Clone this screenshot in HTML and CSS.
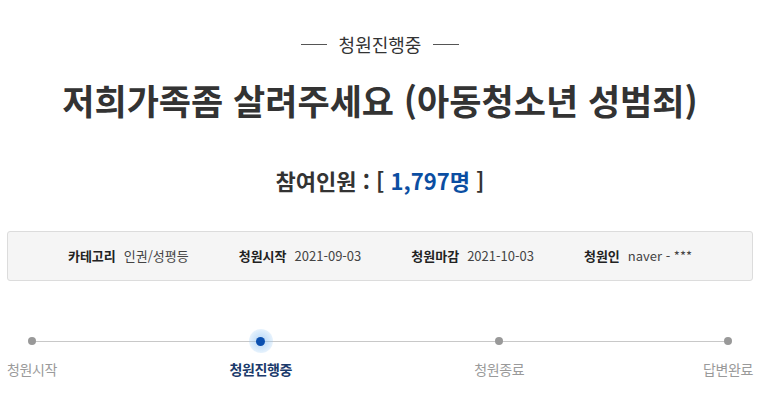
FILE: index.html
```html
<!DOCTYPE html>
<html lang="ko">
<head>
<meta charset="utf-8">
<title>청원진행중</title>
<link rel="stylesheet" href="styles.css">
</head>
<body>
<div class="page">
  <div class="status"><span class="dash"></span><span class="status-text">청원진행중</span><span class="dash"></span></div>
  <h1 class="title">저희가족좀 살려주세요 (아동청소년 성범죄)</h1>
  <p class="count">참여인원 : [ <span class="num">1,797명</span> ]</p>
  <ul class="info">
    <li><b>카테고리</b><span>인권/성평등</span></li>
    <li><b>청원시작</b><span>2021-09-03</span></li>
    <li><b>청원마감</b><span>2021-10-03</span></li>
    <li><b>청원인</b><span>naver - ***</span></li>
  </ul>
  <ol class="steps">
    <li class="step"><span class="dot"></span><span class="label">청원시작</span></li>
    <li class="gapcell"></li>
    <li class="step active"><span class="dot"></span><span class="label">청원진행중</span></li>
    <li class="gapcell"></li>
    <li class="step"><span class="dot"></span><span class="label">청원종료</span></li>
    <li class="gapcell"></li>
    <li class="step"><span class="dot"></span><span class="label">답변완료</span></li>
  </ol>
</div>
</body>
</html>
```
FILE: styles.css
```css
html, body { margin: 0; padding: 0; background: #fff; }
body { font-family: "Noto Sans CJK KR", "Noto Sans", sans-serif; color: #333; }
.page { padding-top: 32px; }
.status { display: flex; justify-content: center; align-items: center; gap: 12px; height: 24px; }
.status-text { font-size: 18px; line-height: 24px; color: #333; }
.dash { width: 26px; height: 1px; background: #555; }
.title { margin: 22px 0 0; text-align: center; font-size: 35px; line-height: 44px; font-weight: 700; color: #333; letter-spacing: 0; }
.count { margin: 43px 0 0; text-align: center; font-size: 22px; line-height: 30px; font-weight: 700; color: #333; letter-spacing: 0; }
.num { color: #0b4ea2; }
.info { list-style: none; margin: 36px 7px 0; padding: 0; height: 48px; border: 1px solid #dcdcdc; border-radius: 3px; background: #f5f5f5; display: flex; justify-content: center; align-items: center; gap: 50px; }
.info li { display: flex; gap: 8px; font-size: 13px; line-height: 18px; letter-spacing: 0; }
.info b { font-weight: 700; color: #222; }
.info span { color: #444; }
.steps { list-style: none; margin: 48px 0 0; padding: 0; display: grid; grid-template-columns: 64px 1fr 64px 1.06fr 64px 1fr 64px; position: relative; }
.steps::before { content: ""; position: absolute; left: 32px; right: 31px; top: 12px; height: 1px; background: #c8c8c8; }
.step { display: flex; flex-direction: column; align-items: center; position: relative; }
.dot { width: 24px; height: 24px; display: flex; align-items: center; justify-content: center; }
.dot::after { content: ""; width: 8px; height: 8px; border-radius: 50%; background: #999; }
.active .dot { border-radius: 50%; background: radial-gradient(circle, rgba(120,180,240,0.55) 0%, rgba(150,200,245,0.35) 55%, rgba(200,225,250,0) 100%); }
.active .dot::after { width: 9px; height: 9px; background: #0b50b0; }
.label { margin-top: 6px; font-size: 14px; line-height: 20px; color: #9a9a9a; white-space: nowrap; letter-spacing: -0.4px; }
.active .label { color: #1b3a6b; font-weight: 700; }
```
